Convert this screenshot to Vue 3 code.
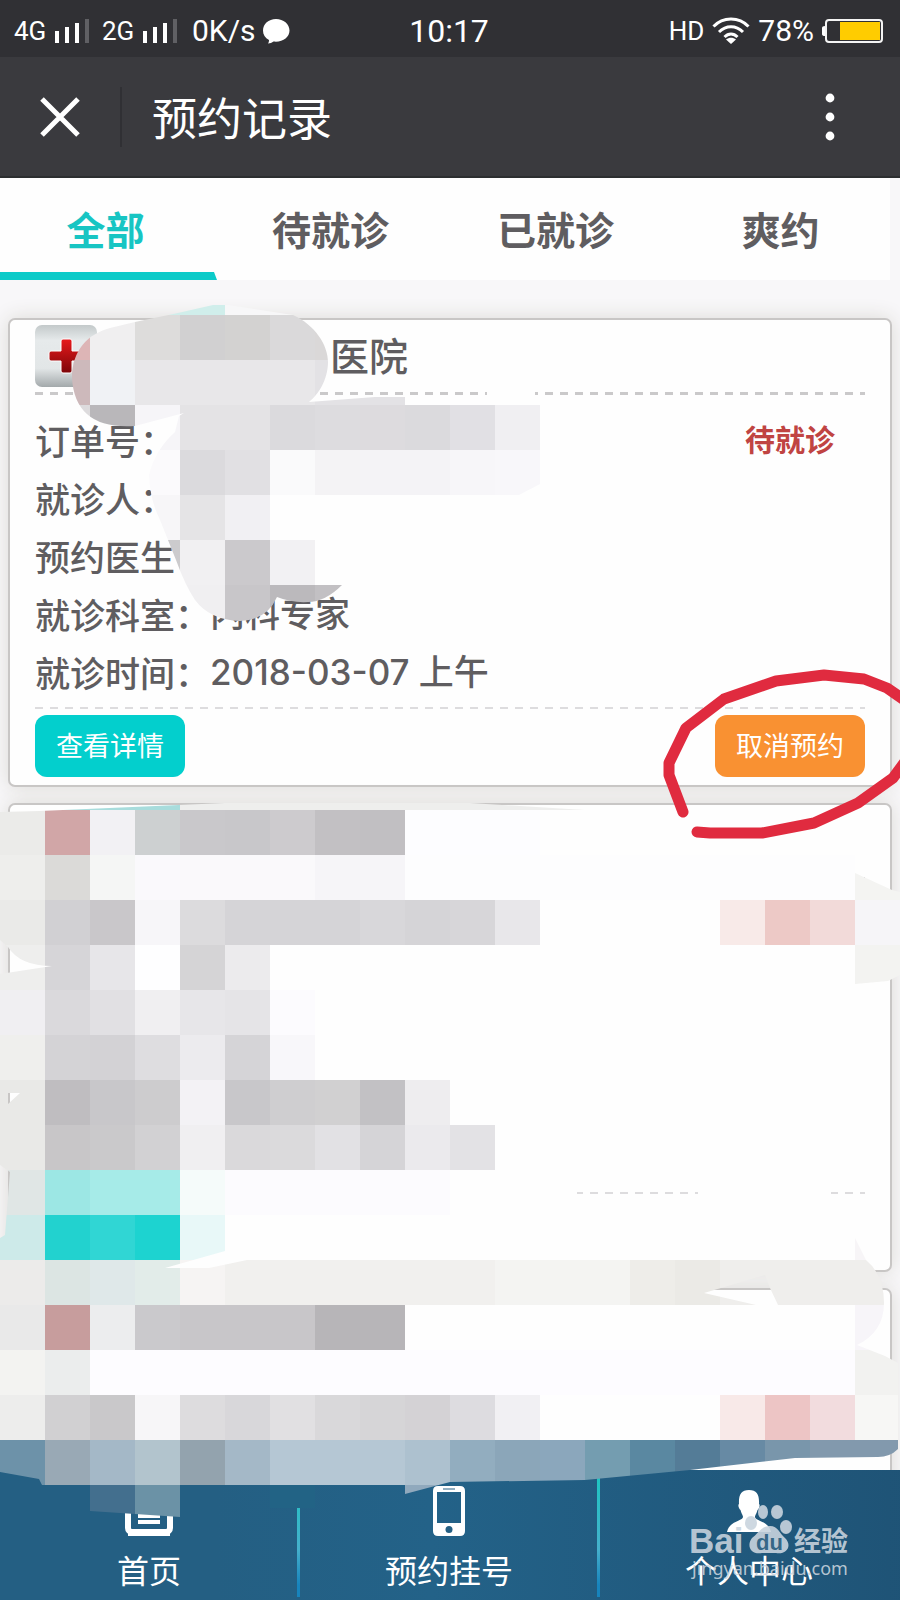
<template>
  <div class="page">
    <div class="status-bar">
      <div class="status-side">
        <span class="net">4G</span>
        <svg class="signal" viewBox="0 0 36 26" width="36" height="26">
          <path fill="#fff" d="M1 13h4v12H1zM11 9h4v16h-4zM21 5h4v20h-4z"/>
          <path fill="#606064" d="M31 1h4v24h-4z"/>
        </svg>
        <span class="net second">2G</span>
        <svg class="signal" viewBox="0 0 36 26" width="36" height="26">
          <path fill="#fff" d="M1 13h4v12H1zM11 9h4v16h-4zM21 5h4v20h-4z"/>
          <path fill="#606064" d="M31 1h4v24h-4z"/>
        </svg>
        <span class="speed">0K/s</span>
        <svg class="bubble" viewBox="0 0 28 26" width="28" height="26">
          <path fill="#fff" d="M14 1C6.500 1 1 6 1 12.500c0 4 2 7.500 6 9.500 0 1.500-.3 2.500-1 3.500 2 0 4-.8 5.500-2 9 1 16-4 16-11C27.500 6 21.500 1 14 1z"/>
        </svg>
      </div>
      <span class="clock">10:17</span>
      <div class="status-side right">
        <span class="hd">HD</span>
        <svg viewBox="0 0 38 28" width="38" height="28" fill="none" stroke="#fff" stroke-width="3">
          <path d="M1.500 9.500C11-.5 27-.5 36.500 9.500M7 15c7-7 17-7 24 0M12.500 20c4-4 9-4 13 0"/>
          <path fill="#fff" stroke="none" d="M19 27l-5-4.500c3-2.500 7-2.500 10 0z"/>
        </svg>
        <span class="percent">78%</span>
        <svg class="battery" viewBox="0 0 62 26" width="62" height="26">
          <path fill="#fff" d="M0 10q0-2 3-2v10q-3 0-3-2z"/>
          <rect x="4" y="2" width="56" height="22" rx="3" fill="none" stroke="#f4f4f4" stroke-width="2"/>
          <path fill="#fc0" d="M18 4h40v18H18z"/>
        </svg>
      </div>
    </div>

    <header class="header">
      <button class="close" aria-label="关闭">
        <svg viewBox="0 0 40 40" width="40" height="40">
          <path stroke="#fff" stroke-width="5" d="M2 2l36 36M38 2L2 38"/>
        </svg>
      </button>
      <h1>预约记录</h1>
      <button class="more" aria-label="更多">
        <svg viewBox="0 0 10 48" width="10" height="48" fill="#fff">
          <circle cx="5" cy="5" r="4.400"/>
          <circle cx="5" cy="24" r="4.400"/>
          <circle cx="5" cy="43" r="4.400"/>
        </svg>
      </button>
    </header>

    <nav class="tabs">
      <button
        v-for="tab in tabs"
        :key="tab"
        :class="{ active: tab === activeTab }"
        @click="activeTab = tab"
      >{{ tab }}</button>
    </nav>

    <main class="list">
      <article v-for="record in records" :key="record.id" class="card">
        <div class="card-head">
          <template v-if="record.hospital">
            <svg viewBox="0 0 62 62" width="62" height="62">
              <defs>
                <linearGradient id="tile" x1="0" y1="0" x2="0" y2="1">
                  <stop offset="0" stop-color="#c3c9ca"/>
                  <stop offset="0.250" stop-color="#e6eaeb"/>
                  <stop offset="0.700" stop-color="#e2e6e7"/>
                  <stop offset="1" stop-color="#a3a9ab"/>
                </linearGradient>
                <linearGradient id="cross" x1="0" y1="0" x2="0" y2="1">
                  <stop offset="0" stop-color="#e8191c"/>
                  <stop offset="1" stop-color="#7d0508"/>
                </linearGradient>
              </defs>
              <rect width="62" height="62" rx="7" fill="url(#tile)"/>
              <path fill="url(#cross)" stroke="#fff" d="M28 14h7q2 0 2 2v10h10q2 0 2 2v6q0 2-2 2H37v10q0 2-2 2h-7q-2 0-2-2V36H16q-2 0-2-2v-6q0-2 2-2h10V16q0-2 2-2z"/>
            </svg>
            <h2>{{ record.hospital }}</h2>
          </template>
        </div>
        <div class="dashes"></div>
        <div class="card-body">
          <dl>
            <div v-for="field in record.fields" :key="field.label">
              <dt>{{ field.label }}</dt>
              <dd>{{ field.value }}</dd>
            </div>
          </dl>
          <span class="state">{{ record.state }}</span>
        </div>
        <div class="dashes light"></div>
        <div class="card-foot">
          <template v-if="record.hospital">
            <button class="detail">查看详情</button>
            <button class="cancel">取消预约</button>
          </template>
        </div>
      </article>
    </main>

    <nav class="bottom-nav">
      <a href="#home">
        <svg viewBox="0 0 50 52" width="50" height="52">
          <rect x="4" y="4" width="42" height="43" rx="4" fill="none" stroke="#fff" stroke-width="6"/>
          <path stroke="#fff" stroke-width="4" d="M14 17h22M14 24h22M14 31h22M14 37h22"/>
          <path stroke="#fff" stroke-width="6" d="M4 48h42"/>
        </svg>
        <span>首页</span>
      </a>
      <a href="#booking">
        <svg viewBox="0 0 34 52" width="34" height="52">
          <path fill="#fff" fill-rule="evenodd" d="M6 1h22q5 0 5 5v40q0 5-5 5H6q-5 0-5-5V6q0-5 5-5zM5 7v31h24V7z"/>
          <circle cx="17" cy="44.500" r="3.500" fill="#245f83"/>
          <path stroke="#245f83" d="M11 4h12"/>
        </svg>
        <span>预约挂号</span>
      </a>
      <a href="#profile">
        <svg viewBox="0 0 46 52" width="46" height="52">
          <path fill="#fff" d="M23 5c8 0 10.500 5 10 14 1.500 1 0 5-1.500 6-1 4-2.500 5-2.500 7 0 4 14 4 16 15H1c2-11 16-11 16-15 0-2-1.500-3-2.500-7-1.500-1-3-5-1.500-6C12.500 10 15 5 23 5z"/>
        </svg>
        <span>个人中心</span>
      </a>
    </nav>

    <svg class="overlay" viewBox="0 0 900 1600" width="900" height="1600" aria-hidden="true">
      <defs>
        <clipPath id="smear-top">
          <path d="M72 378C72 350 88 334 110 328L135 322L178 313L213 305H228L293 315C315 325 328 345 328 362C328 380 318 395 309 402L375 397H405V405H540V484L519 495H315V585H342Q325 602 308 602Q292 603 277 597Q267 620 240 621Q210 620 195 600Q185 585 176 560L160 520Q150 500 149 475Q155 450 175 432L179 416L184 413L135 426Q75 430 72 378Z"/>
        </clipPath>
        <clipPath id="smear-list">
          <path clip-rule="evenodd" d="M0 812L40 811L225 803H470L585 810H855V873L892 890L900 892V975L888 981L855 984V1238L866 1260Q884 1275 884 1303Q884 1332 857 1345L885 1356L898 1363V1449Q890 1457 878 1457L795 1458L690 1470L585 1480L450 1482L405 1494V1485H315V1508H270V1485H180V1517L150 1515L90 1511V1485H42L39 1479L0 1472ZM0 940L8 947Q20 966 52 966L0 974ZM7 1093H20L8 1104ZM0 1165L10 1172L5 1235L0 1238ZM704 1293L765 1275L770 1288L778 1305H756Z"/>
        </clipPath>
      </defs>
      <g v-for="mosaic in mosaics" :key="mosaic.id" :clip-path="`url(#${mosaic.id})`" shape-rendering="crispEdges">
        <rect
          v-for="cell in mosaic.cells"
          :key="cell.key"
          :x="cell.x"
          :y="cell.y"
          :width="cell.width"
          height="45"
          :fill="cell.fill"
        />
      </g>
      <path fill="#fefefe" d="M487 390h48v6h-48zM450 1190h127v8H450zM698 1190h133v8H698zM165 1268L225 1251V1250H290L247 1260L209 1268z"/>
      <g fill="none" stroke="#e02b3f" stroke-width="11" stroke-linecap="round" stroke-linejoin="round">
        <path d="M683 812L669 775V763L686 728L724 699L776 681L824 675L864 679L887 688L910 704"/>
        <path d="M910 755L893 778L858 803L814 823L762 833H710L697 832"/>
      </g>
      <g class="watermark">
        <text x="689" y="1553" font-size="35" font-weight="700">Bai</text>
        <path d="M770 1526C778 1526 780 1534 785 1538C793 1546 786 1555 776 1553H762C751 1555 746 1546 752 1538C758 1534 761 1526 770 1526Z"/>
        <ellipse cx="763" cy="1512" rx="5" ry="7"/>
        <ellipse cx="777" cy="1512" rx="6" ry="7"/>
        <ellipse cx="786" cy="1527" rx="6" ry="7"/>
        <ellipse cx="751" cy="1523" rx="6" ry="7"/>
        <text class="du" x="756" y="1550" font-size="22" font-weight="700">du</text>
        <text x="794" y="1551" font-size="27" font-weight="700">经验</text>
        <text class="url" x="692" y="1575" font-size="18">jingyan.baidu.com</text>
      </g>
    </svg>
  </div>
</template>

<script setup>
import { ref } from 'vue'

const tabs = ['全部', '待就诊', '已就诊', '爽约']
const activeTab = ref('全部')

const records = [
  {
    id: 1,
    hospital: '医院',
    state: '待就诊',
    fields: [
      { label: '订单号：', value: '' },
      { label: '就诊人：', value: '' },
      { label: '预约医生：', value: '' },
      { label: '就诊科室：', value: '内科专家' },
      { label: '就诊时间：', value: '2018-03-07 上午' }
    ]
  },
  { id: 2, fields: [] },
  { id: 3, fields: [] }
]

const CELL = 45

// 每行: [y, 起始列, 颜色列表]，颜色后的 *n 表示重复 n 格
const topRows = [
  [270, 3, '#d0eeeb*2 #f7f7f8*2'],
  [315, 1, '#ddb5b6 #f0eff0 #dddcdb #d1d0d1 #d3d2d1 #dad9da #dad8d8'],
  [360, 1, '#cdb9bb #f0f2f5 #e8e7e9*4 #e3e2e5*3'],
  [405, 1, '#dddbdd #b9b7ba #f6f5f8 #e4e3e5*2 #dbdadd #dddcdf #dddbde #dbdadd #e1e0e4 #f0eff2'],
  [450, 3, '#fbfafc #dbdadd #e1e0e3 #fafafb #f4f3f5 #f4f3f6*2 #f7f6f9 #f8f7fa'],
  [495, 3, '#f7f6f8 #e5e4e6 #f1f0f3'],
  [540, 3, '#cccbcd #f1f0f2 #cbc9cc #f2f1f3'],
  [585, 4, '#f0eff1 #c8c6c9 #bbb9bc #c2c0c3']
]

const listRows = [
  [765, 0, '#eeeeed #a8dcdc*3 #eeeeed*9'],
  [810, 0, '#ebebe9 #d1a6a7 #f2f1f4 #cdd0d1 #c9c8cb #c8c7ca #cdcbce #c2c0c3 #c1bfc2 #fdfdff*3'],
  [855, 0, '#eeeeec #dbdad8 #f5f6f5 #faf9fc #faf9fb*3 #f6f5f8*2 #fdfdfe*10 #f4f4f2'],
  [900, 0, '#eaeae8 #d1d0d3 #c9c7ca #f7f6f9 #dcdbdd #d5d4d7*3 #d8d7da #d5d4d7 #d7d6d9 #e8e7ea #fefefe*4 #f8eae8 #edc9c6 #f2dad9 #f6f5f8'],
  [945, 0, '#eeeeed #d6d5d8 #e7e6e9 #fefeff #d5d4d6 #ecebed #fefefe*13 #f3f3f1'],
  [990, 0, '#f0eff2 #dad9dc #e1e0e3 #f0eff1 #e7e6e9 #e5e4e7 #fcfbfe'],
  [1035, 0, '#efefed #d4d3d6 #d3d2d5 #dedde0 #ecebee #d5d4d7 #f8f7fa'],
  [1080, 0, '#e9e9e7 #bfbdc0 #c8c7ca #cdccce #f3f2f5 #c8c7ca #cfced0 #d1d0d1 #c2c1c4 #eeedef'],
  [1125, 0, '#e9e9e7 #c8c6c8 #cac9cb #d2d1d3 #f0eff1 #dad9db #dbdadc #e2e1e4 #d5d4d7 #ebeaed #e3e2e5'],
  [1170, 0, '#e0e6e5 #9ce7e4 #a6ebe8*2 #f5fbfa #fcfbfe*5'],
  [1215, 0, '#cdeae9 #22d2cf #30d6d4 #1dd3d0 #e8f8f8 #fefefe*14 #f7f5f7'],
  [1260, 0, '#ecebea #dce5e3 #dfe8e9 #e2ece9 #f6f4f3 #f1f0ee*6 #f4f4f2*3 #eeede9 #ebeae6 #efeeec*4'],
  [1305, 0, '#e9e9e9 #c79d9d #ecedee #cac9cc #c8c6c9*3 #b7b5b8*2 #fefefe*10 #f7f5f9'],
  [1350, 0, '#f3f3f1 #ebeded #fdfcff*17 #f2f2f0'],
  [1395, 0, '#ededec #d1d0d2 #c9c8ca #f7f6f8 #dddcde #d8d7da #e1e0e2 #d9d8da #d6d5d7 #d4d2d5 #dddce0 #f1f0f3 #fefefe*4 #f8e9e8 #edc5c5 #f2dcde #f7f7f5'],
  [1440, 0, '#6d92a9 #99a9b5 #a4b8c7 #b2c4cd #93a3ae #a4b8c7 #b5c7d4*3 #adc1cf #92adbf #8ba6b9 #8ba7bc #749db0 #5a88a1 #547c97 #678aa4 #7996ab #8299ad*2'],
  [1485, 2, '#436f8e #6b92a6'],
  [1485, 6, '#226385'],
  [1485, 9, '#90a9bd']
]

const toCells = (rows) => rows.flatMap(([y, start, colors]) => {
  let col = start
  return colors.split(' ').map((run) => {
    const [fill, count = 1] = run.split('*')
    const cell = { key: `${y}-${col}`, x: col * CELL, y, width: count * CELL, fill }
    col += Number(count)
    return cell
  })
})

const mosaics = [
  { id: 'smear-top', cells: toCells(topRows) },
  { id: 'smear-list', cells: toCells(listRows) }
]
</script>

<style>
body {
  margin: 0;
}
</style>

<style scoped>
.page {
  position: relative;
  display: flex;
  flex-direction: column;
  height: 100vh;
  overflow: hidden;
  background: #f8f7f9;
  color: #5f5d60;
  font-family: "Noto Sans CJK SC", sans-serif;
}

button {
  padding: 0;
  border: none;
  background: none;
  color: inherit;
  font-family: inherit;
  cursor: pointer;
}

.status-bar {
  display: grid;
  grid-template-columns: 1fr auto 1fr;
  align-items: center;
  height: 57px;
  padding: 4px 16px 0 14px;
  box-sizing: border-box;
  background: #303034;
  color: #fff;
  font-family: Roboto, sans-serif;
}

.status-side {
  display: flex;
  align-items: center;
}

.status-side.right {
  justify-content: flex-end;
  gap: 8px;
}

.net {
  width: 32px;
  font-size: 26px;
}

.net.second {
  margin-left: 12px;
}

.signal {
  margin-left: 8px;
}

.speed,
.percent {
  font-size: 30px;
}

.hd {
  font-size: 26px;
}

.signal + .speed {
  margin-left: 14px;
}

.bubble {
  margin-left: 6px;
}

.clock {
  font-size: 32px;
}

.header {
  display: flex;
  align-items: center;
  height: 121px;
  box-sizing: border-box;
  border-bottom: 2px solid #2c2e30;
  background: #3a3a3e;
  color: #fff;
}

.close {
  display: flex;
  align-items: center;
  justify-content: center;
  width: 122px;
  height: 60px;
  border-right: 2px solid #303034;
}

.header h1 {
  flex: 1;
  margin: 0;
  padding-left: 30px;
  font-size: 45px;
  font-weight: 400;
  line-height: 60px;
}

.more {
  display: flex;
  justify-content: center;
  width: 60px;
  margin-right: 40px;
}

.tabs {
  display: flex;
  height: 102px;
  background: linear-gradient(90deg, #fefefe calc(100% - 10px), #f8f7f9 0);
}

.tabs button {
  position: relative;
  flex: 1;
  padding: 0 14px 2px 0;
  font-size: 39px;
  font-weight: 700;
}

.tabs .active {
  color: #17c5c3;
}

.tabs .active::after {
  content: "";
  position: absolute;
  right: 8px;
  bottom: 0;
  left: 0;
  height: 8px;
  background: #0ccbc9;
  clip-path: polygon(0 0, calc(100% - 3px) 0, 100% 100%, 0 100%);
}

.list {
  flex: 1;
  min-height: 0;
  overflow: hidden;
  padding: 38px 8px 0;
}

.card {
  margin-bottom: 16px;
  padding: 5px 25px 8px;
  border: 2px solid #c8c6c5;
  border-radius: 7px;
  background: #fefefe;
  box-shadow: 0 0 20px #dbdad5;
}

.card-head {
  display: flex;
  align-items: center;
  height: 62px;
}

.card-head h2 {
  margin: 0;
  padding: 0 0 4px 233px;
  font-size: 39px;
  font-weight: 500;
}

.dashes {
  height: 3px;
  margin-top: 5px;
  background: repeating-linear-gradient(90deg, #cac9ca 0 8px, transparent 8px 15px);
}

.dashes.light {
  height: 2px;
  background: repeating-linear-gradient(90deg, #dddcde 0 8px, transparent 8px 15px);
}

.card-body {
  display: flex;
  justify-content: space-between;
  min-height: 291px;
  padding-top: 16px;
}

dl {
  margin: 0;
  font-size: 35px;
  font-weight: 500;
  line-height: 58px;
}

dl div {
  display: flex;
}

dd {
  margin: 0;
  font-family: Inter, "Noto Sans CJK SC", sans-serif;
}

.state {
  padding-right: 30px;
  color: #c04442;
  font-size: 30px;
  font-weight: 700;
  line-height: 54px;
}

.card-foot {
  display: flex;
  justify-content: space-between;
  height: 62px;
  margin-top: 6px;
}

.card-foot button {
  width: 150px;
  padding-bottom: 3px;
  border-radius: 12px;
  color: #fff;
  font-size: 27px;
}

.detail {
  background: #03cfcd;
}

.cancel {
  background: #f99132;
}

.bottom-nav {
  position: relative;
  display: flex;
  height: 130px;
  background: linear-gradient(90deg, #245f83 0 24%, #236288 48%, #29608550 100%), #1a4e70;
}

.bottom-nav a {
  position: relative;
  flex: 1;
  display: flex;
  flex-direction: column;
  align-items: center;
  gap: 9px;
  padding: 15px 2px 0 0;
  color: #fff;
  font-size: 32px;
  line-height: 46px;
  text-decoration: none;
}

.bottom-nav a + a::before {
  content: "";
  position: absolute;
  top: 8px;
  bottom: 3px;
  left: -3px;
  width: 3px;
  background: linear-gradient(#1ec5c2, #45b0cc 60%, #1784bd 90%);
}

.overlay {
  position: absolute;
  top: 0;
  left: 0;
  pointer-events: none;
}

.watermark {
  fill: #c9d4de;
  fill-opacity: 0.9;
  font-family: "Liberation Sans", "Noto Sans CJK SC", sans-serif;
}

.watermark .du {
  fill: #245a7c;
}

.watermark .url {
  font-family: "Noto Sans", sans-serif;
}
</style>
